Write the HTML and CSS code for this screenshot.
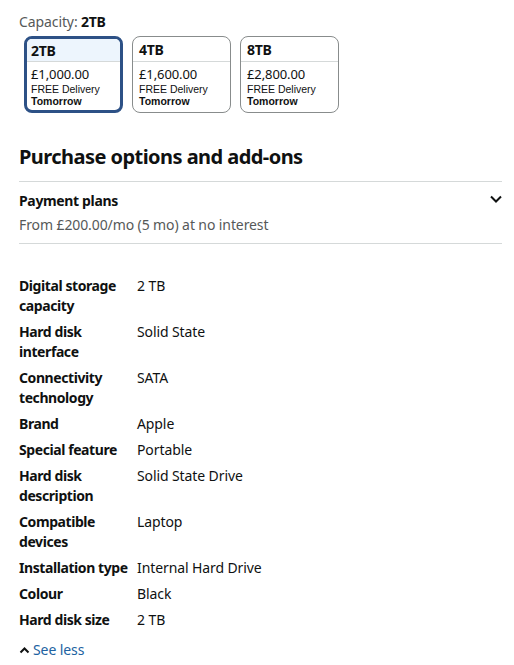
FILE: index.html
```html
<!DOCTYPE html>
<html>
<head>
<meta charset="utf-8">
<link rel="stylesheet" href="styles.css">
</head>
<body>
<div class="page">
  <div class="capacity">Capacity: <b>2TB</b></div>
  <div class="swatches">
    <div class="swatch selected">
      <div class="sw-head">2TB</div>
      <div class="sw-body">
        <div class="price">£1,000.00</div>
        <div class="deliv">FREE Delivery</div>
        <div class="deliv b">Tomorrow</div>
      </div>
    </div>
    <div class="swatch">
      <div class="sw-head">4TB</div>
      <div class="sw-body">
        <div class="price">£1,600.00</div>
        <div class="deliv">FREE Delivery</div>
        <div class="deliv b">Tomorrow</div>
      </div>
    </div>
    <div class="swatch">
      <div class="sw-head">8TB</div>
      <div class="sw-body">
        <div class="price">£2,800.00</div>
        <div class="deliv">FREE Delivery</div>
        <div class="deliv b">Tomorrow</div>
      </div>
    </div>
  </div>

  <h2 class="heading">Purchase options and add-ons</h2>
  <div class="plans">
    <div class="plans-top">
      <div class="plans-title">Payment plans</div>
      <svg class="chev" width="14" height="10" viewBox="0 0 14 10"><path d="M2 2.5 L7 7.5 L12 2.5" fill="none" stroke="#0f1111" stroke-width="2"/></svg>
    </div>
    <div class="plans-sub">From £200.00/mo (5 mo) at no interest</div>
  </div>

  <table class="specs">
    <tr><th>Digital storage capacity</th><td>2 TB</td></tr>
    <tr><th>Hard disk interface</th><td>Solid State</td></tr>
    <tr><th>Connectivity technology</th><td>SATA</td></tr>
    <tr><th>Brand</th><td>Apple</td></tr>
    <tr><th>Special feature</th><td>Portable</td></tr>
    <tr><th>Hard disk description</th><td>Solid State Drive</td></tr>
    <tr><th>Compatible devices</th><td>Laptop</td></tr>
    <tr><th>Installation type</th><td>Internal Hard Drive</td></tr>
    <tr><th>Colour</th><td>Black</td></tr>
    <tr><th>Hard disk size</th><td>2 TB</td></tr>
  </table>
  <div class="seeless">
    <svg width="11" height="8" viewBox="0 0 11 8"><path d="M1.5 6.5 L5.5 2.5 L9.5 6.5" fill="none" stroke="#0f1111" stroke-width="2"/></svg>
    <span>See less</span>
  </div>
</div>
</body>
</html>
```

FILE: styles.css
```css
* { box-sizing: border-box; }
html, body { margin: 0; padding: 0; background: #fff; }
body {
  font-family: "Noto Sans", "Open Sans", sans-serif;
  color: #0f1111;
  letter-spacing: -0.1px;
}
.page {
  padding: 12px 12px 0 19px;
  width: 514px;
}
.capacity {
  font-size: 14px;
  line-height: 20px;
  color: #565959;
}
.capacity b { color: #0f1111; letter-spacing: -0.3px; }
.swatches {
  display: flex;
  gap: 9px;
  margin-top: 4px;
  margin-left: 5px;
}
.swatch {
  width: 99px;
  height: 77px;
  border: 1px solid #888c8c;
  border-radius: 8px;
  overflow: hidden;
}
.swatch.selected {
  border: 3px solid #2d5186;
  width: 99px;
}
.sw-head {
  height: 25px;
  border-bottom: 1px solid #d5d9d9;
  font-size: 14px;
  font-weight: 700;
  line-height: 26px;
  padding-left: 6px;
  letter-spacing: -0.3px;
}
.selected .sw-head {
  background: #edf5fd;
  height: 23px;
  line-height: 24px;
  padding-left: 4px;
}
.sw-body { padding: 3px 6px 0; }
.selected .sw-body { padding-left: 4px; }
.price { font-size: 13px; line-height: 18px; }
.deliv {
  font-family: "Liberation Sans", Arial, sans-serif;
  font-size: 10.5px;
  line-height: 12px;
  letter-spacing: 0;
}
.deliv.b { font-weight: 700; }
.heading {
  font-size: 20px;
  font-weight: 700;
  line-height: 28px;
  margin: 30px 0 0;
  letter-spacing: -0.55px;
}
.plans {
  margin-top: 10px;
  border-top: 1px solid #d5d9d9;
  border-bottom: 1px solid #d5d9d9;
  width: 483px;
  padding: 10px 0 8px;
}
.plans-top {
  display: flex;
  justify-content: space-between;
  align-items: center;
}
.plans-title {
  font-size: 14px;
  font-weight: 700;
  line-height: 18px;
  letter-spacing: -0.35px;
}
.chev { margin-right: -1px; margin-top: -4px; }
.plans-sub {
  font-size: 14px;
  line-height: 20px;
  color: #565959;
  margin-top: 5px;
}
.specs {
  border-collapse: collapse;
  margin-top: 32px;
}
.specs th, .specs td {
  font-size: 14px;
  line-height: 20px;
  vertical-align: top;
  text-align: left;
  padding: 0 0 6px;
}
.specs th {
  font-weight: 700;
  width: 118px;
  min-width: 118px;
  max-width: 118px;
  padding-right: 6px;
  letter-spacing: -0.42px;
}
.specs td { padding-left: 0; }
.seeless {
  display: flex;
  align-items: center;
  gap: 3px;
  font-size: 14px;
  line-height: 20px;
  color: #2162a1;
  margin-top: 4px;
}
```
